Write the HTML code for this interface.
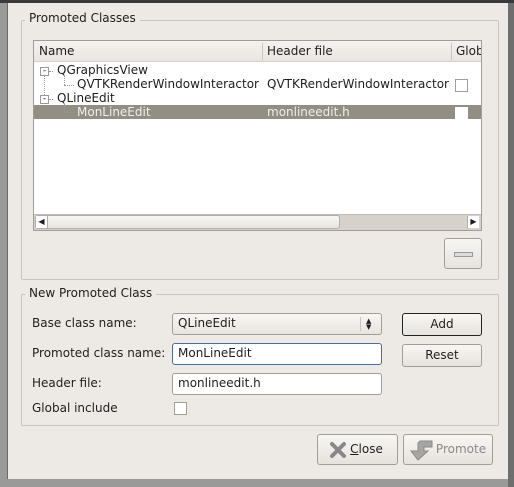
<!DOCTYPE html>
<html><head><style>
*{box-sizing:border-box;margin:0;padding:0}
body{width:514px;height:487px;background:#9a9a98;position:relative;overflow:hidden;font-family:"DejaVu Sans","Liberation Sans",sans-serif;font-size:12px;color:#1e1e1e}
.a{position:absolute}
.dlg{left:7px;top:3px;width:501px;height:476px;background:#edeae5;border-left:1px solid #6a6a6a}
.grp{border:1px solid #c9c5bd;border-radius:2px}
.title{background:#edeae5;padding:0 4px}
.btn{border:1px solid #a29d95;border-radius:3px;background:linear-gradient(#f7f6f3,#e6e3de);text-align:center}
.edit{border:1px solid #a29d95;border-radius:3px;background:#fff;padding-left:5px;line-height:19px}
.cb{width:13px;height:13px;border:1px solid #a29d95;background:#fff}
.dot{border-top:1px dotted #999}
.vdot{border-left:1px dotted #999}
</style></head><body>
<div class="a" style="left:0;top:0;width:514px;height:3px;background:#3a3a3a"></div>
<div class="a dlg"></div>
<div class="a grp" style="left:21px;top:20px;width:478px;height:260px"></div>
<div class="a title" style="left:25px;top:11px">Promoted Classes</div>
<div class="a" style="left:33px;top:40px;width:449px;height:191px;border:1px solid #a29d95;background:#fff;overflow:hidden">
 <div class="a" style="left:0;top:0;right:0;height:21px;background:linear-gradient(#f4f2ef,#e9e6e1);border-bottom:1px solid #d5d1ca"></div>
 <div class="a" style="left:5px;top:3px">Name</div>
 <div class="a" style="left:228px;top:2px;height:17px;border-left:1px solid #c9c5bd"></div>
 <div class="a" style="left:233px;top:3px">Header file</div>
 <div class="a" style="left:417px;top:2px;height:17px;border-left:1px solid #c9c5bd"></div>
 <div class="a" style="left:422px;top:3px;width:25px;overflow:hidden;white-space:nowrap">Glob</div>
 <div class="a" style="left:0;top:64px;right:0;height:14px;background:#928e84"></div>
 <div class="a" style="left:6px;top:26px;width:9px;height:9px;border:1px solid #999;background:#fff;font-size:9px;line-height:6px;text-align:center">-</div>
 <div class="a" style="left:6px;top:54px;width:9px;height:9px;border:1px solid #999;background:#fff;font-size:9px;line-height:6px;text-align:center">-</div>
 <div class="a vdot" style="left:10px;top:35px;height:19px"></div>
 <div class="a dot" style="left:15px;top:30px;width:4px"></div>
 <div class="a dot" style="left:15px;top:58px;width:4px"></div>
 <div class="a vdot" style="left:30px;top:35px;height:9px"></div>
 <div class="a dot" style="left:30px;top:44px;width:10px"></div>
 <div class="a vdot" style="left:30px;top:63px;height:8px"></div>
 <div class="a dot" style="left:30px;top:71px;width:10px"></div>
 <div class="a" style="left:23px;top:22px">QGraphicsView</div>
 <div class="a" style="left:43px;top:36px">QVTKRenderWindowInteractor</div>
 <div class="a" style="left:233px;top:36px">QVTKRenderWindowInteractor</div>
 <div class="a cb" style="left:421px;top:38px"></div>
 <div class="a" style="left:23px;top:50px">QLineEdit</div>
 <div class="a" style="left:43px;top:64px;color:#eee">MonLineEdit</div>
 <div class="a" style="left:233px;top:64px;color:#eee">monlineedit.h</div>
 <div class="a cb" style="left:421px;top:66px;border-color:#fff"></div>
 <div class="a" style="left:0;top:173px;right:0;height:16px;background:#d6d1ca;border-top:1px solid #c0bbb3"></div>
 <div class="a" style="left:1px;top:174px;width:305px;height:14px;background:linear-gradient(#f8f7f5,#e8e5e0);border:1px solid #b3aea6;border-radius:3px"></div>
 <div class="a" style="left:2px;top:175px;width:12px;height:12px;background:#fff;border-right:1px solid #b3aea6;font-size:8px;line-height:12px;text-align:center">◀</div>
 <div class="a" style="left:433px;top:175px;width:12px;height:12px;background:#fff;border-left:1px solid #b3aea6;font-size:8px;line-height:12px;text-align:center">▶</div>
</div>
<div class="a btn" style="left:444px;top:238px;width:38px;height:31px"><div class="a" style="left:9px;top:13px;width:19px;height:5px;border:1px solid #999;background:#ddd"></div></div>
<div class="a grp" style="left:21px;top:294px;width:478px;height:132px"></div>
<div class="a title" style="left:25px;top:286px">New Promoted Class</div>
<div class="a" style="left:32px;top:316px">Base class name:</div>
<div class="a" style="left:32px;top:346px">Promoted class name:</div>
<div class="a" style="left:32px;top:376px">Header file:</div>
<div class="a" style="left:32px;top:401px">Global include</div>
<div class="a edit" style="left:172px;top:313px;width:210px;height:22px;background:linear-gradient(#f7f6f3,#e8e5e0)">QLineEdit<div class="a" style="left:187px;top:3px;height:14px;border-left:1px solid #c9c5bd"></div><div class="a" style="left:193px;top:4px;font-size:7px;line-height:6px">▲<br>▼</div></div>
<div class="a edit" style="left:172px;top:343px;width:210px;height:22px;border-color:#4a6f9a">MonLineEdit</div>
<div class="a edit" style="left:172px;top:373px;width:210px;height:22px">monlineedit.h</div>
<div class="a cb" style="left:174px;top:402px"></div>
<div class="a btn" style="left:402px;top:313px;width:80px;height:23px;border-color:#222;line-height:21px">Add</div>
<div class="a btn" style="left:402px;top:344px;width:80px;height:23px;line-height:21px">Reset</div>
<div class="a btn" style="left:317px;top:434px;width:81px;height:31px;line-height:29px;padding-left:18px"><svg class="a" style="left:11px;top:6px" width="18" height="18" viewBox="0 0 18 18"><path d="M3 3L15 15M15 3L3 15" stroke="#888" stroke-width="4" stroke-linecap="round"/></svg><u>C</u>lose</div>
<div class="a btn" style="left:403px;top:434px;width:90px;height:31px;line-height:29px;padding-left:26px;color:#8a8a8a"><svg class="a" style="left:6px;top:4px" width="24" height="22" viewBox="0 0 24 22"><path d="M10 2H22V8H14V12H18L8 21L1 12H8V4Z" fill="#a5a5a3" stroke="#8a8a88"/></svg>Promote</div>
<div class="a" style="left:508px;top:3px;width:6px;height:484px;background:#6e6e6e"></div>
<div class="a" style="left:7px;top:479px;width:501px;height:8px;background:#9a9a98"></div>
</body></html>
